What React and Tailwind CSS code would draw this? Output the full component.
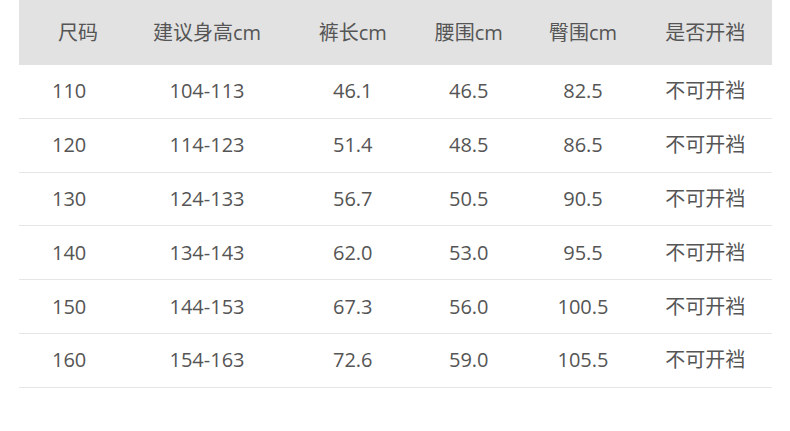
import React from 'react';

const headers = ['尺码', '建议身高cm', '裤长cm', '腰围cm', '臀围cm', '是否开裆'];

const rows = [
  ['110', '104-113', '46.1', '46.5', '82.5', '不可开裆'],
  ['120', '114-123', '51.4', '48.5', '86.5', '不可开裆'],
  ['130', '124-133', '56.7', '50.5', '90.5', '不可开裆'],
  ['140', '134-143', '62.0', '53.0', '95.5', '不可开裆'],
  ['150', '144-153', '67.3', '56.0', '100.5', '不可开裆'],
  ['160', '154-163', '72.6', '59.0', '105.5', '不可开裆'],
];

// column widths taken from the picture, sum 753
const grid = 'grid grid-cols-[113.5px_149px_130.5px_113.5px_119px_127.5px]';

const headCell = ['pl-[39px] text-left', 'text-center', 'text-center pl-[12px]', 'text-center', 'text-center pr-[4px]', 'text-center pr-[6px]'];
const bodyCell = ['pl-[33px] text-left', 'text-center', 'text-center pl-[12px]', 'text-center', 'text-center pr-[4px]', 'text-center pr-[6px]'];

const SizeTable = () => {
  return (
    <div className="w-[753px] ml-[19px]">
      <div className={`${grid} h-[65px] items-center bg-[#e2e2e2]`}>
        {headers.map((h, i) => (
          <div key={h} className={headCell[i]}>{h}</div>
        ))}
      </div>
      {rows.map((r) => (
        <div key={r[0]} className={`${grid} h-[53.8px] items-center border-b border-[#e6e6e6]`}>
          {r.map((c, i) => (
            <div key={i} className={bodyCell[i]}>{c}</div>
          ))}
        </div>
      ))}
    </div>
  );
};

export default function App() {
  return (
    <div
      className="w-[790px] h-[431px] bg-white text-[20px] leading-none text-[#555555] overflow-hidden"
      style={{ fontFamily: '"Open Sans", "Noto Sans CJK SC", sans-serif' }}
    >
      <SizeTable />
    </div>
  );
}
